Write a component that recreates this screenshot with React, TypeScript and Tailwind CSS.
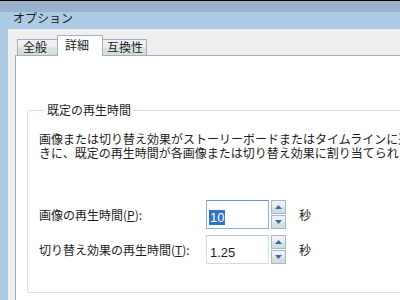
function SpinArrow({ up }: { up?: boolean }) {
  return (
    <svg width="7" height="4" viewBox="0 0 7 4">
      <polygon points={up ? '0,4 3.5,0 7,4' : '0,0 3.5,4 7,0'} fill="#3568bc" />
    </svg>
  );
}

function Spinner() {
  const btn =
    'flex h-[14px] w-[15px] items-center justify-center border border-[#a2b7d3] bg-[linear-gradient(to_bottom,#f3f3f3_0%,#ebebeb_45%,#d9e3da_55%,#d3ddd5_100%)]';
  return (
    <div className="ml-[2px] flex flex-col gap-[1px]">
      <div className={btn}>
        <SpinArrow up />
      </div>
      <div className={btn}>
        <SpinArrow />
      </div>
    </div>
  );
}

interface FieldRowProps {
  label: string;
  hotkey: string;
  value: string;
  focused?: boolean;
}

function FieldRow({ label, hotkey, value, focused }: FieldRowProps) {
  return (
    <div className="flex items-center">
      <div className="w-[167px] text-[12px] leading-[14px]">
        {label}(<span className="underline">{hotkey}</span>):
      </div>
      <div
        className={
          focused
            ? 'h-[29px] w-[63px] border border-[#8fb0d6] border-t-[#6f95c6] bg-white pt-[2px] pl-[2px]'
            : 'h-[29px] w-[63px] border border-[#d3dce2] border-t-[#bccbd6] bg-white pt-[2px] pl-[3px]'
        }
      >
        <span
          className={
            focused
              ? "bg-[#3173c5] px-[1px] font-['Liberation_Sans',sans-serif] text-[13px] leading-[17px] text-white"
              : "font-['Liberation_Sans',sans-serif] text-[13px] leading-[17px] text-[#1c1c1c]"
          }
        >
          {value}
        </span>
      </div>
      <Spinner />
      <span className="ml-[13px] text-[12px] leading-[14px]">秒</span>
    </div>
  );
}

export default function App() {
  return (
    <div className="flex h-[300px] w-[400px] flex-col overflow-hidden border-t border-black bg-[#aecbe6] font-['Noto_Sans_CJK_JP',sans-serif] text-[#1c1c1c]">
      {/* Title bar */}
      <div className="h-[11px] shrink-0 bg-[#9ab2cd]" />
      <div className="h-[17px] shrink-0 pl-[13px] text-[12px] leading-[11px]">オプション</div>

      {/* Dialog body */}
      <div className="ml-[8px] flex flex-1 flex-col bg-[#efefef] pt-[6px] pl-[7px]">
        {/* Tabs */}
        <div className="relative z-10 flex h-[20px] items-end pl-[2px] text-[12px] leading-[14px]">
          <div className="h-[16px] w-[40px] border-t border-l border-[#a0b0c8] bg-[linear-gradient(to_bottom,#f3f3f3_0%,#ededed_45%,#dae3da_55%,#d4ded4_100%)] pt-[0px] pl-[5px]">
            全般
          </div>
          <div className="-mb-[1px] h-[21px] w-[46px] self-end border-x border-t border-[#a0b0c8] bg-white pt-[2px] pl-[7px]">
            詳細
          </div>
          <div className="h-[16px] w-[44px] border-t border-r border-[#a0b0c8] bg-[linear-gradient(to_bottom,#f3f3f3_0%,#ededed_45%,#dae3da_55%,#d4ded4_100%)] pt-[0px] pl-[4px]">
            互換性
          </div>
        </div>

        {/* Tab pane */}
        <div className="flex-1 border-t border-l border-[#a0b0c8] bg-white pl-[11px]">
          <fieldset className="mt-[47px] w-[420px] rounded-[3px] border border-[#d5dfe5] px-[11px] pb-[28px]">
            <legend className="ml-[6px] px-[2px] text-[12px] leading-[14px]">既定の再生時間</legend>
            <div className="overflow-hidden pt-[15px] text-[12px] leading-[14px] whitespace-nowrap">
              <div>画像または切り替え効果がストーリーボードまたはタイムラインに追加されたと</div>
              <div>きに、既定の再生時間が各画像または切り替え効果に割り当てられます。</div>
            </div>
            <div className="mt-[40px] flex flex-col gap-[6px]">
              <FieldRow label="画像の再生時間" hotkey="P" value="10" focused />
              <FieldRow label="切り替え効果の再生時間" hotkey="T" value="1.25" />
            </div>
          </fieldset>
        </div>
      </div>
    </div>
  );
}
